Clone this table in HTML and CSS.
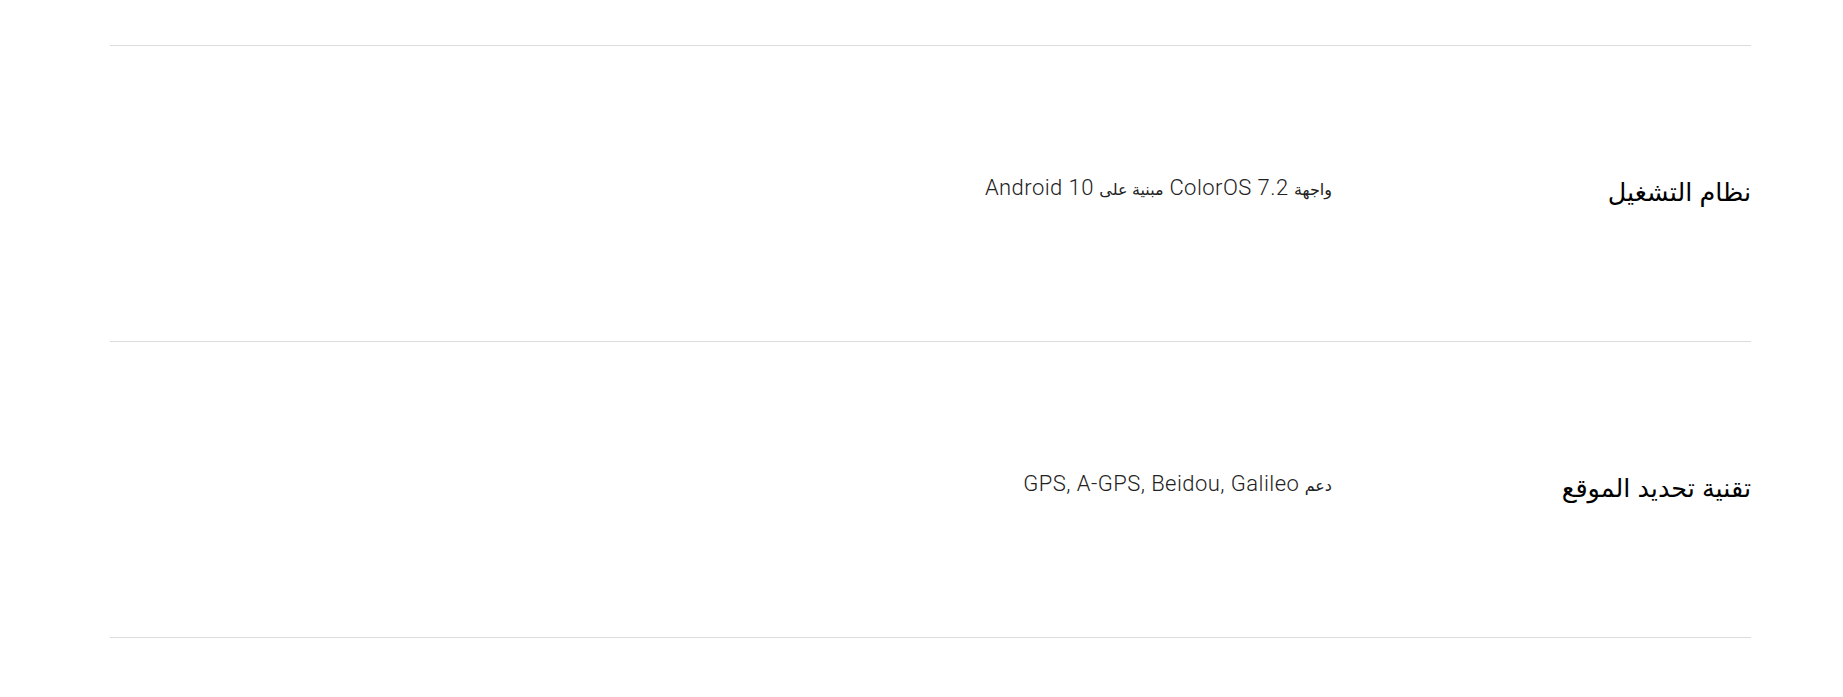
FILE: index.html
```html
<!DOCTYPE html>
<html lang="ar" dir="rtl">
<head>
<meta charset="utf-8">
<link rel="stylesheet" href="styles.css">
</head>
<body>
<div class="specs">
  <div class="row">
    <div class="label">نظام التشغيل</div>
    <div class="value"><span class="ar">واجهة</span> ColorOS 7.2 <span class="ar">مبنية على</span> Android 10</div>
  </div>
  <div class="row">
    <div class="label">تقنية تحديد الموقع</div>
    <div class="value"><span class="ar">دعم</span> GPS, A-GPS, Beidou, Galileo</div>
  </div>
</div>
</body>
</html>
```
FILE: styles.css
```css
html, body {
  margin: 0;
  padding: 0;
  background: #fff;
}
.specs {
  margin: 45px 92px 0 110px;
  border-bottom: 1px solid #dcdcdc;
}
.row {
  display: grid;
  grid-template-columns: 419px 1fr;
  align-items: center;
  height: 295px;
  border-top: 1px solid #dcdcdc;
}
.label {
  font-family: "Liberation Sans", "DejaVu Sans", sans-serif;
  font-size: 25.5px;
  color: #000;
  text-align: right;
  padding-bottom: 4px;
}
.value {
  font-family: Roboto, "DejaVu Sans", sans-serif;
  font-weight: 300;
  font-size: 22px;
  letter-spacing: 0.45px;
  color: #222;
  text-align: right;
  padding-bottom: 12px;
}
.ar {
  font-family: "Liberation Sans", "DejaVu Sans", sans-serif;
  font-weight: 400;
  font-size: 16px;
  letter-spacing: 0;
}
```
